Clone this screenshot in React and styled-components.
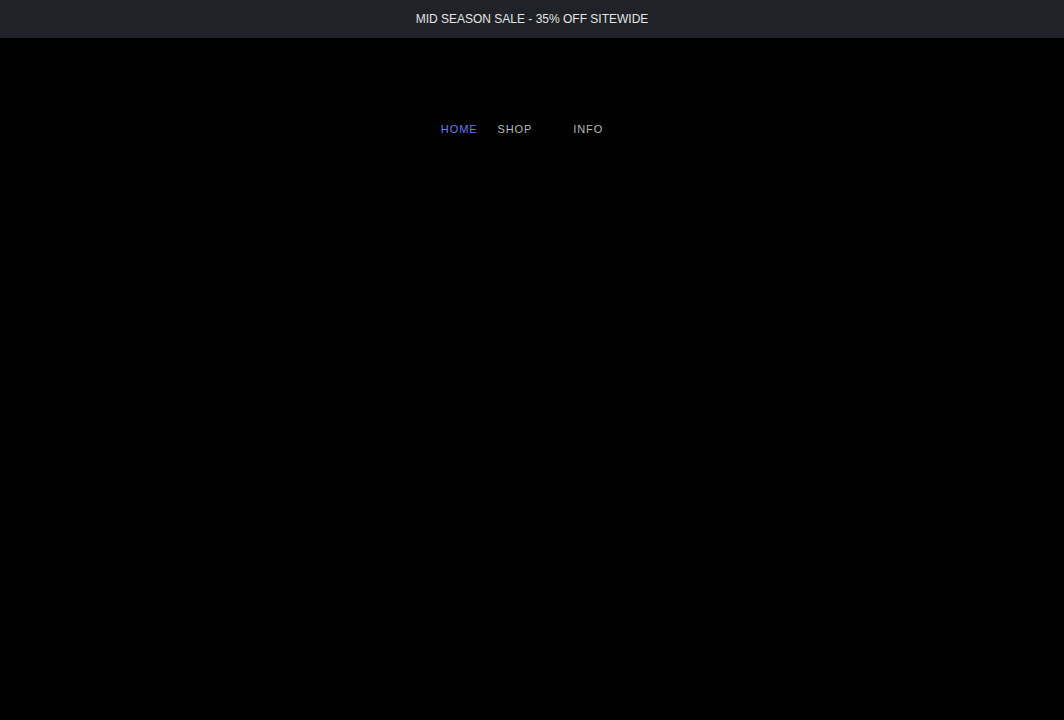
import React from 'react'
import styled, { createGlobalStyle } from 'styled-components'

const Global = createGlobalStyle`
  html, body {
    margin: 0;
    background: #000;
    font-family: "Liberation Sans", Arial, sans-serif;
  }
`

const Page = styled.div`
  min-height: 720px;
  background: #000;
`

const Announcement = styled.div`
  height: 38px;
  background: #1f2327;
  display: flex;
  align-items: center;
  justify-content: center;
  color: #e4e4e4;
  font-size: 12px;
`

const Header = styled.header`
  padding-top: 84px;
  display: flex;
  justify-content: center;
`

const Nav = styled.nav`
  display: flex;
  align-items: center;
  margin-right: 20px;
`

const NavItem = styled.a`
  font-size: 11px;
  letter-spacing: 0.9px;
  color: ${p => (p.$active ? '#7272ff' : '#b8b8b8')};
  text-decoration: none;
  margin-right: ${p => p.$space ?? 20}px;
  line-height: 14px;
`

export default function App() {
  return (
    <Page>
      <Global />
      <Announcement>MID SEASON SALE - 35% OFF SITEWIDE</Announcement>
      <Header>
        <Nav>
          <NavItem href="#" $active>HOME</NavItem>
          <NavItem href="#" $space={41}>SHOP</NavItem>
          <NavItem href="#" $space={0}>INFO</NavItem>
        </Nav>
      </Header>
    </Page>
  )
}
